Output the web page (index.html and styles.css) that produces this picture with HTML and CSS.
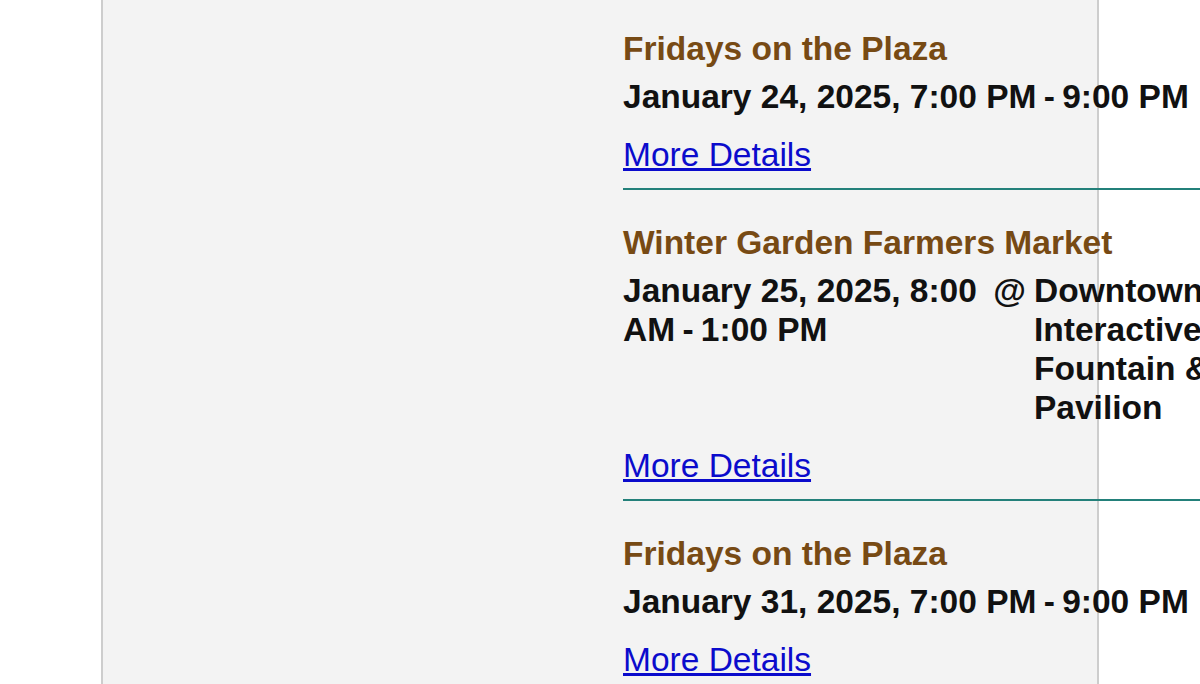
FILE: index.html
```html
<!DOCTYPE html>
<html lang="en">
  <head>
    <meta charset="UTF-8" />
    <meta name="viewport" content="width=device-width, initial-scale=1.0" />
    <title>Upcoming Events</title>
    <link rel="stylesheet" href="styles.css">
  </head>
  <body>
    <div class="page">
      <div class="sidebar"></div>

      <!-- Upcoming events list -->
      <div class="events">
        <div class="event">
          <h3 class="event-title">Fridays on the Plaza</h3>
          <div class="event-meta">
            <span class="event-date">January 24, 2025, 7:00 PM <span class="sep">-</span> 9:00 PM</span>
          </div>
          <a href="#" class="event-link">More Details</a>
        </div>

        <div class="event">
          <h3 class="event-title">Winter Garden Farmers Market</h3>
          <div class="event-meta">
            <span class="event-date">January 25, 2025, 8:00 AM <span class="sep">-</span> 1:00 PM</span>
            <span class="event-at">@</span>
            <span class="event-venue">Downtown Interactive Fountain &amp; Pavilion</span>
          </div>
          <a href="#" class="event-link">More Details</a>
        </div>

        <div class="event">
          <h3 class="event-title">Fridays on the Plaza</h3>
          <div class="event-meta">
            <span class="event-date">January 31, 2025, 7:00 PM <span class="sep">-</span> 9:00 PM</span>
          </div>
          <a href="#" class="event-link">More Details</a>
        </div>
      </div>
    </div>
  </body>
</html>
```

FILE: styles.css
```css
/* General Styling */
body {
  margin: 0;
  background-color: #fff;
  font-family: "Liberation Sans", Arial, sans-serif;
  color: #111;
}
.page {
  display: flex;
  margin-left: 101px;
  width: 994px;
  min-height: 100vh;
  background-color: #f3f3f3;
  border-left: 2px solid #cdcdcd;
  border-right: 2px solid #cdcdcd;
}
.sidebar {
  flex: 0 0 520px;
}
.events {
  flex: 0 0 591px;
  width: 591px;
}
.event {
  padding: 33px 0 14px;
  border-bottom: 2px solid #23807a;
}
.event:first-child {
  padding-top: 29px;
}
.event-title {
  margin: 0 0 9px;
  font-size: 33.5px;
  line-height: 39px;
  font-weight: bold;
  color: #774a14;
}
.event-meta {
  display: flex;
  gap: 8px;
  margin-bottom: 19px;
  font-size: 33.5px;
  line-height: 39px;
  font-weight: bold;
}
.event-date {
  flex: 0 1 auto;
}
.event-date .sep {
  margin: 0 -2px;
}
.event-at {
  flex: none;
}
.event-venue {
  flex: 0 0 180px;
}
.event-link {
  display: inline-block;
  font-size: 33.5px;
  line-height: 39px;
  color: #0b0bcc;
}
```
